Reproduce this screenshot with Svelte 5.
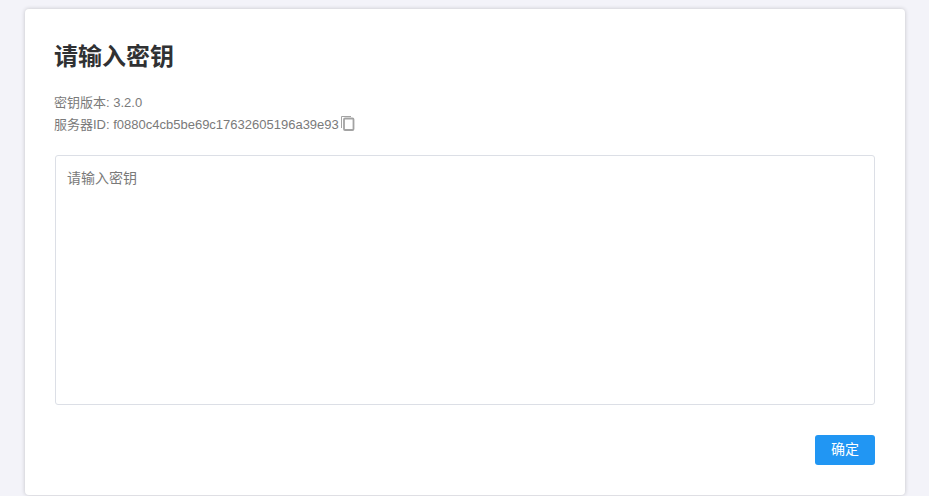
<script>
	let key = $state("");
	const version = "3.2.0";
	const serverId = "f0880c4cb5be69c17632605196a39e93";
</script>

<main class="page">
	<section class="card">
		<h1>请输入密钥</h1>
		<div class="info">
			<p>密钥版本: {version}</p>
			<p class="server">
				服务器ID: {serverId}<svg class="copy" width="15" height="16" viewBox="0 0 15 16" fill="none" stroke="#a3a3a3">
					<path d="M1.5 13V1.5H11" stroke-width="1" />
					<rect x="4" y="3.5" width="9.5" height="11.5" rx="1" stroke-width="1.8" />
				</svg>
			</p>
		</div>
		<textarea bind:value={key} placeholder="请输入密钥"></textarea>
		<div class="actions">
			<button type="button">确定</button>
		</div>
	</section>
</main>

<style>
	:global(body) {
		background: #f3f3f9;
		font-family: "Liberation Sans", "Noto Sans CJK SC", sans-serif;
	}
	.page {
		height: 496px;
		overflow: hidden;
		padding: 9px 24px 0 25px;
		box-sizing: border-box;
	}
	.card {
		background: #fff;
		border-radius: 4px;
		box-shadow: 0 0 4px rgba(0, 0, 0, 0.2);
		padding: 30px;
		height: 486px;
		box-sizing: border-box;
	}
	h1 {
		margin: 0 0 0 -1px;
		font-size: 24px;
		line-height: 36px;
		font-weight: 700;
		color: #303133;
	}
	.info {
		margin: 16px 0 0 -1px;
		font-size: 13px;
		line-height: 23px;
		color: #7a7a7a;
	}
	.info p {
		margin: 0;
	}
	.info .server {
		height: 23px;
		margin-top: -1px;
	}
	.copy {
		vertical-align: -2px;
		margin-left: 1px;
	}
	textarea {
		display: block;
		width: 100%;
		height: 250px;
		margin-top: 19px;
		padding: 11px;
		box-sizing: border-box;
		border: 1px solid #dcdfe6;
		border-radius: 3px;
		outline: none;
		resize: none;
		font-family: inherit;
		font-size: 14px;
		line-height: 22px;
		color: #606266;
	}
	textarea::placeholder {
		color: #7a7a7a;
		opacity: 1;
	}
	.actions {
		display: flex;
		justify-content: flex-end;
		margin-top: 30px;
	}
	button {
		width: 60px;
		height: 30px;
		border: none;
		border-radius: 3px;
		background: #2196f3;
		color: #fff;
		font-family: inherit;
		font-size: 14px;
		line-height: 28px;
		padding: 0 0 2px;
	}
</style>
